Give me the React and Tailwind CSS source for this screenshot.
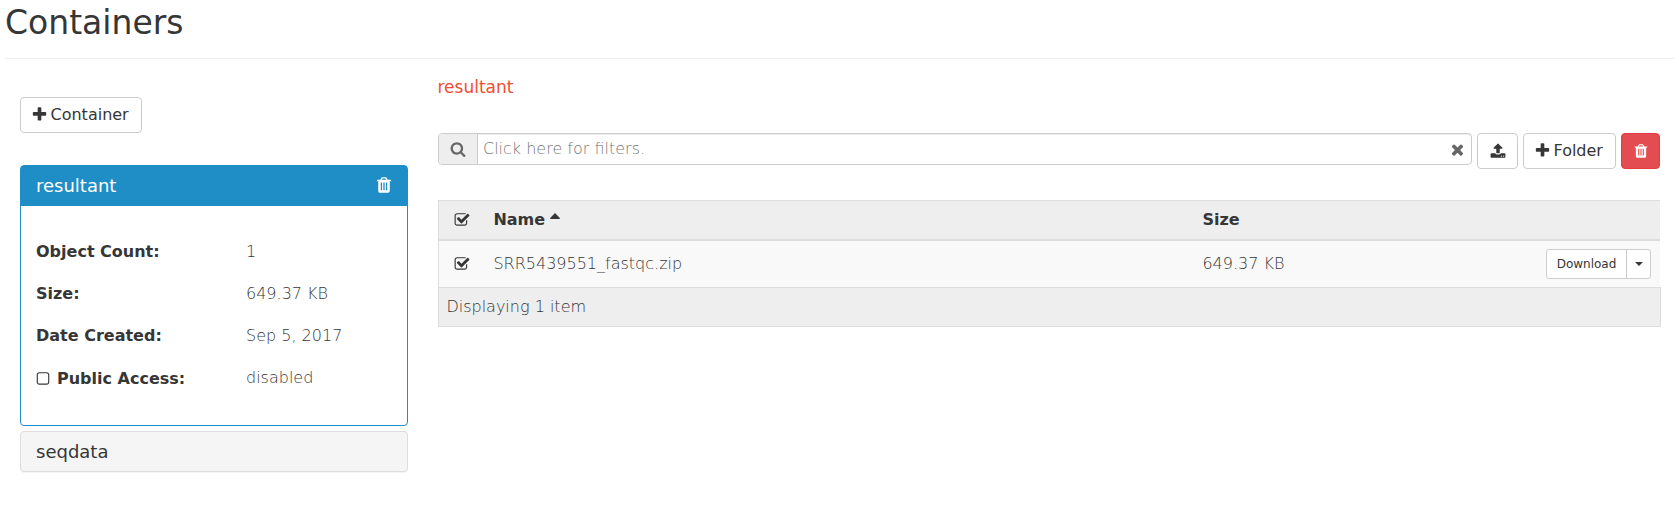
import React from "react";

const PATHS = {
  plus: "M1600 736v192q0 40-28 68t-68 28h-416v416q0 40-28 68t-68 28h-192q-40 0-68-28t-28-68v-416h-416q-40 0-68-28t-28-68v-192q0-40 28-68t68-28h416v-416q0-40 28-68t68-28h192q40 0 68 28t28 68v416h416q40 0 68 28t28 68z",
  trash: "M704 1376v-704q0-14-9-23t-23-9h-64q-14 0-23 9t-9 23v704q0 14 9 23t23 9h64q14 0 23-9t9-23zm256 0v-704q0-14-9-23t-23-9h-64q-14 0-23 9t-9 23v704q0 14 9 23t23 9h64q14 0 23-9t9-23zm256 0v-704q0-14-9-23t-23-9h-64q-14 0-23 9t-9 23v704q0 14 9 23t23 9h64q14 0 23-9t9-23zm-544-992h448l-48-117q-7-9-17-11h-317q-10 2-17 11zm928 32v64q0 14-9 23t-23 9h-96v948q0 83-47 143.5t-113 60.5h-832q-66 0-113-58.5t-47-141.5v-952h-96q-14 0-23-9t-9-23v-64q0-14 9-23t23-9h309l70-167q15-37 54-63t79-26h320q40 0 79 26t54 63l70 167h309q14 0 23 9t9 23z",
  upload: "M1344 1472q0-26-19-45t-45-19-45 19-19 45 19 45 45 19 45-19 19-45zm256 0q0-26-19-45t-45-19-45 19-19 45 19 45 45 19 45-19 19-45zm128-224v320q0 40-28 68t-68 28h-1472q-40 0-68-28t-28-68v-320q0-40 28-68t68-28h427q21 56 70.5 92t110.5 36h256q61 0 110.5-36t70.5-92h427q40 0 68 28t28 68zm-325-648q-17 40-59 40h-256v448q0 26-19 45t-45 19h-256q-26 0-45-19t-19-45v-448h-256q-42 0-59-40-17-39 14-69l448-448q18-19 45-19t45 19l448 448q31 30 14 69z",
  search: "M1216 832q0-185-131.5-316.5t-316.5-131.5-316.5 131.5-131.5 316.5 131.5 316.5 316.5 131.5 316.5-131.5 131.5-316.5zm512 832q0 52-38 90t-90 38q-54 0-90-38l-343-342q-179 124-399 124-143 0-273.5-55.5t-225-150-150-225-55.5-273.5 55.5-273.5 150-225 225-150 273.5-55.5 273.5 55.5 225 150 150 225 55.5 273.5q0 220-124 399l343 343q37 37 37 90z",
  times: "M1490 1322q0 40-28 68l-136 136q-28 28-68 28t-68-28l-294-294-294 294q-28 28-68 28t-68-28l-136-136q-28-28-28-68t28-68l294-294-294-294q-28-28-28-68t28-68l136-136q28-28 68-28t68 28l294 294 294-294q28-28 68-28t68 28l136 136q28 28 28 68t-28 68l-294 294 294 294q28 28 28 68z",
  checked: "M1472 930v318q0 119-84.5 203.5t-203.5 84.5h-832q-119 0-203.5-84.5t-84.5-203.5v-832q0-119 84.5-203.5t203.5-84.5h832q63 0 117 25 15 7 18 23 3 17-9 29l-49 49q-10 10-23 10-3 0-9-2-23-6-45-6h-832q-66 0-113 47t-47 113v832q0 66 47 113t113 47h832q66 0 113-47t47-113v-254q0-13 9-22l64-64q10-10 23-10 6 0 12 3 20 8 20 29zm231-489l-814 814q-24 24-57 24t-57-24l-430-430q-24-24-24-57t24-57l110-110q24-24 57-24t57 24l263 263 647-647q24-24 57-24t57 24l110 110q24 24 24 57t-24 57z",
  square: "M1312 256h-832q-66 0-113 47t-47 113v832q0 66 47 113t113 47h832q66 0 113-47t47-113v-832q0-66-47-113t-113-47zm288 160v832q0 119-84.5 203.5t-203.5 84.5h-832q-119 0-203.5-84.5t-84.5-203.5v-832q0-119 84.5-203.5t203.5-84.5h832q119 0 203.5 84.5t84.5 203.5z",
};

function Icon({ name, className = "size-4" }) {
  return (
    <svg viewBox="0 0 1792 1792" fill="currentColor" className={`shrink-0 ${className}`} aria-hidden="true">
      <path d={PATHS[name]} />
    </svg>
  );
}

function Button({ className, children }) {
  return (
    <button className={`flex h-9 shrink-0 items-center rounded border text-base ${className}`}>
      {children}
    </button>
  );
}

function Detail({ label, value, checkbox }) {
  return (
    <div className="flex h-[42px] items-center">
      <div className={`flex w-[210px] items-center font-bold ${checkbox ? "pt-px" : ""}`}>
        {checkbox && <Icon name="square" className="-ml-[1.5px] mr-[6.5px] size-4" />}
        {label}
      </div>
      <div className="font-extralight">{value}</div>
    </div>
  );
}

function Sidebar() {
  return (
    <aside className="w-[388px] pt-[38px]">
      <Button className="w-[122px] gap-[2.5px] border-[#ccc] bg-white pl-2.5">
        <Icon name="plus" className="mb-px size-[17px]" />
        Container
      </Button>
      <section className="mt-8 h-[261px] rounded border border-[#1f8dc6] bg-white">
        <header className="flex h-10 items-center justify-between bg-[#1f8dc6] px-[15px] text-lg text-white">
          resultant
          <Icon name="trash" className="-mr-px mb-0.5 size-[18px]" />
        </header>
        <div className="px-[15px] pt-[25px]">
          <Detail label="Object Count:" value="1" />
          <Detail label="Size:" value="649.37 KB" />
          <Detail label="Date Created:" value="Sep 5, 2017" />
          <Detail label="Public Access:" value="disabled" checkbox />
        </div>
      </section>
      <section className="mt-[5px] flex h-[41px] items-center rounded border border-[#ddd] bg-[#f5f5f5] px-[15px] text-lg shadow-[0_1px_1px_rgba(0,0,0,0.05)]">
        seqdata
      </section>
    </aside>
  );
}

function Toolbar() {
  return (
    <div className="mt-[34px] flex items-start gap-[5px] pr-px">
      <div className="flex h-8 flex-1 rounded border border-[#ccc] bg-white shadow-[inset_0_1px_1px_rgba(0,0,0,0.075)]">
        <div className="flex w-[39px] items-center justify-center rounded-l-[3px] border-r border-[#ccc] bg-[#eee] text-[#666]">
          <Icon name="search" />
        </div>
        <div className="flex flex-1 items-center justify-between pr-[5px] pl-[5px] font-extralight text-[#777]">
          Click here for filters.
          <Icon name="times" className="size-[17px] text-[#666]" />
        </div>
      </div>
      <Button className="w-[41px] justify-center border-[#ccc] bg-white">
        <Icon name="upload" />
      </Button>
      <Button className="w-[93px] gap-[2.5px] border-[#ccc] bg-white pl-2.5">
        <Icon name="plus" className="mb-px size-[17px]" />
        Folder
      </Button>
      <Button className="w-[39px] justify-center border-[#e33b3f] bg-[#e34c50] text-white">
        <Icon name="trash" />
      </Button>
    </div>
  );
}

function ObjectTable() {
  return (
    <div className="mt-[31px]">
      <div className="mr-px border-l border-[#ddd]">
        <div className="flex h-[41px] items-center border-t border-b-2 border-[#ddd] bg-[#eee] font-bold">
          <div className="w-[54.4px] pl-[15px]">
            <Icon name="checked" />
          </div>
          <div className="flex w-[709px] items-center">
            Name
            <svg viewBox="0 0 10 6" className="mb-2 ml-[5px] h-1.5 w-2.5" fill="currentColor">
              <path d="M5 0 L10 5.2 Q10 6 9.3 6 H.7 Q0 6 0 5.2Z" />
            </svg>
          </div>
          <div>Size</div>
        </div>
        <div className="flex h-[46px] items-center bg-[#f9f9f9] pr-[9px] font-extralight">
          <div className="w-[54.4px] pl-[15px]">
            <Icon name="checked" />
          </div>
          <div className="w-[709px]">SRR5439551_fastqc.zip</div>
          <div className="flex-1">649.37 KB</div>
          <div className="flex h-[30px] rounded-[3px] border border-[#ccc] bg-white text-xs font-normal">
            <button className="w-20 border-r border-[#ccc]">Download</button>
            <button className="flex w-[23px] items-center justify-center">
              <svg viewBox="0 0 8 4" className="h-1 w-2" fill="currentColor">
                <path d="M0 0H8L4 4Z" />
              </svg>
            </button>
          </div>
        </div>
      </div>
      <div className="flex h-10 items-center border border-[#ddd] bg-[#eee] pl-[7.4px] font-extralight">
        Displaying 1 item
      </div>
    </div>
  );
}

export default function App() {
  return (
    <div className="h-[509px] bg-white px-[5px] font-['DejaVu_Sans',sans-serif] text-base leading-6 text-[#363636]">
      <h1 className="h-[59px] border-b border-[#eee] pt-[3px] text-[33px] leading-10">Containers</h1>
      <main className="flex gap-[30px] pr-[13px] pl-[15px]">
        <Sidebar />
        <div className="min-w-0 flex-1 pt-4">
          <div className="-ml-[0.5px] text-[17px] leading-6 text-[#f04e30]">resultant</div>
          <Toolbar />
          <ObjectTable />
        </div>
      </main>
    </div>
  );
}
